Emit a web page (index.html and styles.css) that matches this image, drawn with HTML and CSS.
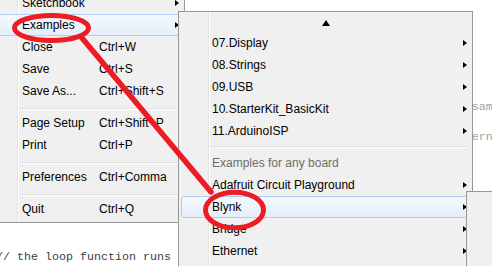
FILE: index.html
```html
<!DOCTYPE html>
<html>
<head>
<meta charset="utf-8">
<title>Arduino File menu</title>
<link rel="stylesheet" href="styles.css">
</head>
<body>
<div class="screen">
<pre class="editor"><span class="cm">/*
  Blink

  Turns an LED on for one second, then off for one second,
  repeatedly.

  Most Arduinos have an on-board LED you can control, and it is the same
  pin on most boards: LED_BUILTIN.
  This example code is in the public domain, and works with most modern
  boards.
*/</span>
<span class="kw">void</span> <span class="fn">setup</span>() {
  <span class="fn">pinMode</span>(LED_BUILTIN, OUTPUT);
}


<span class="lc">// the loop function runs over and over again forever</span></pre>

  <div class="menu file-menu">
    <div class="item has-sub"><span class="label">Sketchbook</span><span class="key"></span><span class="arrow"></span></div>
    <div class="item has-sub active"><span class="label">Examples</span><span class="key"></span><span class="arrow"></span></div>
    <div class="item"><span class="label">Close</span><span class="key">Ctrl+W</span></div>
    <div class="item"><span class="label">Save</span><span class="key">Ctrl+S</span></div>
    <div class="item"><span class="label">Save As...</span><span class="key">Ctrl+Shift+S</span></div>
    <div class="sep"></div>
    <div class="item"><span class="label">Page Setup</span><span class="key">Ctrl+Shift+P</span></div>
    <div class="item"><span class="label">Print</span><span class="key">Ctrl+P</span></div>
    <div class="sep"></div>
    <div class="item"><span class="label">Preferences</span><span class="key">Ctrl+Comma</span></div>
    <div class="sep"></div>
    <div class="item"><span class="label">Quit</span><span class="key">Ctrl+Q</span></div>
  </div>

  <div class="menu examples-menu">
    <div class="scroll-up"><span class="up-arrow"></span></div>
    <div class="item has-sub"><span class="label">07.Display</span><span class="arrow"></span></div>
    <div class="item has-sub"><span class="label">08.Strings</span><span class="arrow"></span></div>
    <div class="item has-sub"><span class="label">09.USB</span><span class="arrow"></span></div>
    <div class="item has-sub"><span class="label">10.StarterKit_BasicKit</span><span class="arrow"></span></div>
    <div class="item has-sub"><span class="label">11.ArduinoISP</span><span class="arrow"></span></div>
    <div class="sep"></div>
    <div class="item heading"><span class="label">Examples for any board</span></div>
    <div class="item has-sub"><span class="label">Adafruit Circuit Playground</span><span class="arrow"></span></div>
    <div class="item has-sub active"><span class="label">Blynk</span><span class="arrow"></span></div>
    <div class="item has-sub"><span class="label">Bridge</span><span class="arrow"></span></div>
    <div class="item has-sub"><span class="label">Ethernet</span><span class="arrow"></span></div>
  </div>

  <div class="menu blynk-menu"></div>

  <svg class="annot" width="492" height="266" viewBox="0 0 492 266">
    <g fill="none" stroke="#ed1c24" stroke-linecap="round">
      <ellipse cx="51.5" cy="28" rx="37" ry="12.5" stroke-width="5"/>
      <line x1="82" y1="38" x2="211" y2="192" stroke-width="5.5"/>
      <ellipse cx="234.5" cy="210" rx="29" ry="17.8" stroke-width="5"/>
    </g>
  </svg>
</div>
</body>
</html>
```
FILE: styles.css
```css
html, body {
  margin: 0;
  padding: 0;
}
body {
  width: 492px;
  height: 266px;
  overflow: hidden;
  background: #fff;
  font-family: "Liberation Sans", Arial, sans-serif;
}
.screen {
  position: relative;
  width: 492px;
  height: 266px;
  overflow: hidden;
  background: #fff;
}

/* editor */
.editor {
  margin: 0 0 0 -4px;
  padding: 10px 0 0 0;
  font-family: "Liberation Mono", "Courier New", monospace;
  font-size: 11.67px;
  line-height: 15px;
  color: #434f54;
  white-space: pre;
}
.editor .cm { color: #95a5a6; }
.editor .kw { color: #00979c; }
.editor .fn { color: #d35400; }
.editor .lc { color: #3a4347; }

/* menus */
.menu {
  position: absolute;
  box-sizing: border-box;
  background-color: #f0f0f0;
  border: 1px solid #979797;
  font-size: 12px;
  color: #000;
}
.item {
  position: relative;
  box-sizing: border-box;
  height: 22px;
  line-height: 22px;
  white-space: nowrap;
  display: grid;
  align-items: center;
}
.item > span { position: relative; z-index: 1; }
.item.active::before {
  content: "";
  position: absolute;
  top: 0;
  bottom: 0;
  left: 2px;
  right: 2px;
  border: 1px solid #aecff4;
  border-radius: 3px;
  background: linear-gradient(#f5f9fe, #e4edf9);
  z-index: 0;
}
.arrow {
  width: 0;
  height: 0;
  border-left: 4px solid #000;
  border-top: 3.5px solid transparent;
  border-bottom: 3.5px solid transparent;
}
.sep {
  height: 1px;
  background: #e0e0e0;
  border-bottom: 1px solid #fff;
}

/* File menu */
.file-menu {
  left: -5px;
  top: -11px;
  width: 190px;
  padding: 2px 0;
  background-image: linear-gradient(to right, transparent 21px, #e2e3e3 21px, #e2e3e3 22px, #fff 22px, #fff 23px, transparent 23px);
  z-index: 1;
}
.file-menu .item {
  padding: 1px 5px 0 26px;
  line-height: 21px;
  grid-template-columns: 77px 1fr 4px;
}
.file-menu .item .arrow { margin-top: -1px; }
.file-menu .sep {
  margin: 6px 3px 2px 23px;
}

/* Examples submenu */
.examples-menu {
  left: 178px;
  top: 11px;
  width: 295px;
  height: 270px;
  padding: 2px 0;
  background-image: linear-gradient(to right, transparent 29px, #e2e3e3 29px, #e2e3e3 30px, #fff 30px, #fff 31px, transparent 31px);
  z-index: 2;
}
.examples-menu .item {
  padding: 0 5px 0 33px;
  grid-template-columns: 1fr 4px;
}
.examples-menu .item.heading { color: #6d6d6d; }
.examples-menu .sep {
  margin: 4px 4px 4px 30px;
}
.scroll-up {
  height: 18px;
  display: flex;
  align-items: center;
  justify-content: center;
}
.up-arrow {
  width: 0;
  height: 0;
  border-bottom: 6px solid #000;
  border-left: 4px solid transparent;
  border-right: 4px solid transparent;
}

/* next submenu (Blynk) */
.blynk-menu {
  left: 466px;
  top: 191px;
  width: 60px;
  height: 120px;
  z-index: 3;
}

/* red annotations */
.annot {
  position: absolute;
  left: 0;
  top: 0;
  z-index: 10;
  pointer-events: none;
}
```
